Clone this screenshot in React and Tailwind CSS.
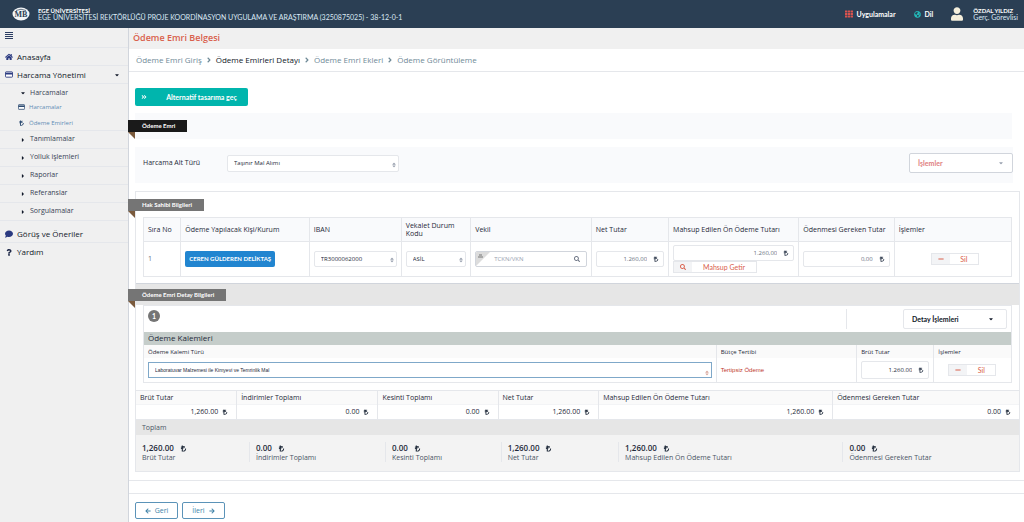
import React from "react";
import {
  FaAngleDoubleRight,
  FaAngleRight,
  FaArrowLeft,
  FaArrowRight,
  FaCaretDown,
  FaCaretRight,
  FaComment,
  FaGlobeAmericas,
  FaHome,
  FaLiraSign,
  FaMinus,
  FaQuestion,
  FaSearch,
  FaSort,
  FaTh,
  FaUser,
} from "react-icons/fa";

const subMenu = ["Tanımlamalar", "Yolluk işlemleri", "Raporlar", "Referanslar", "Sorgulamalar"];

const steps = ["Ödeme Emri Giriş", "Ödeme Emirleri Detayı", "Ödeme Emri Ekleri", "Ödeme Görüntüleme"];

const totals = [
  { name: "Brüt Tutar", value: "1,260.00", col: "w-[11.4%]", box: "w-[12.8%]" },
  { name: "İndirimler Toplamı", value: "0.00", col: "w-[16%]", box: "w-[15.4%]" },
  { name: "Kesinti Toplamı", value: "0.00", col: "w-[13.6%]", box: "w-[13.1%]" },
  { name: "Net Tutar", value: "1,260.00", col: "w-[11.4%]", box: "w-[13.3%]" },
  { name: "Mahsup Edilen Ön Ödeme Tutarı", value: "1,260.00", col: "w-[26.5%]", box: "w-[25.4%]" },
  { name: "Ödenmesi Gereken Tutar", value: "0.00", col: "w-[21.1%]", box: "w-[20%]" },
];

const CardIcon = ({ className }) => (
  <svg className={className} viewBox="0 0 18 14">
    <rect x="1" y="1" width="16" height="12" rx="1.500" fill="#fff" stroke="currentColor" strokeWidth="2" />
    <path d="M1 3h16v4H1z" fill="currentColor" />
  </svg>
);

const Ribbon = ({ children, dark }) => (
  <div className="-ml-2 flex flex-col items-start">
    <h2
      className={`h-3 pl-3.5 pr-3 font-[Lato] text-[6px] font-bold leading-3 text-white ${
        dark ? "bg-[#1a1a1a]" : "bg-[#757575]"
      }`}
    >
      {children}
    </h2>
    <svg className="h-2 w-2" viewBox="0 0 8 8">
      <path d="M0 0h7v7z" fill="#7a5a3c" />
    </svg>
  </div>
);

const Select = ({ label, value, className }) => (
  <div className={`relative ${className}`}>
    <select
      aria-label={label}
      className="h-full w-full appearance-none rounded-xs border border-gray-200 bg-white pl-1.5 pr-3 text-[6px] leading-3 text-gray-800"
    >
      <option>{value}</option>
    </select>
    <FaSort className="pointer-events-none absolute bottom-1 right-0.5 h-1.5 w-1.5 text-gray-400" />
  </div>
);

const Money = ({ label, value, className }) => (
  <div className={`flex items-center rounded-xs border border-gray-200 bg-white pr-1 ${className}`}>
    <input
      aria-label={label}
      defaultValue={value}
      className="w-full min-w-0 bg-transparent text-right text-[6px] leading-3 outline-none"
    />
    <FaLiraSign className="ml-1.5 h-1.5 w-1.5 shrink-0 text-gray-700" />
  </div>
);

const DeleteButton = () => (
  <button className="flex h-3 w-12 items-stretch border border-gray-200 font-[Lato] text-[7px] leading-2.5 text-[#d9604c]">
    <span className="flex w-4.5 items-center justify-center bg-gray-100">
      <FaMinus className="h-1.5 w-1.5" />
    </span>
    <span className="flex-1">Sil</span>
  </button>
);

const Header = () => (
  <header className="flex h-7 items-center justify-between bg-[#2b3f54] pl-3 pr-1.5 font-[Lato] text-white">
    <div className="flex items-center gap-2">
      <svg className="h-4 w-4.5" viewBox="0 0 18 16">
        <ellipse cx="9" cy="8" rx="8.500" ry="6.500" fill="#f3f5f7" />
        <text x="9" y="11" textAnchor="middle" fontSize="8" fontWeight="700" fontFamily="Liberation Serif" fill="#2b3f54">
          MB
        </text>
        <path d="M4 4.500q5-2.500 10 0" fill="none" stroke="#2b3f54" strokeWidth=".7" />
      </svg>
      <div className="leading-[7px]">
        <div className="text-[6px] font-bold">EGE ÜNİVERSİTESİ</div>
        <div className="text-[7px] text-[#dbe9f5]">
          EGE ÜNİVERSİTESİ REKTÖRLÜĞÜ PROJE KOORDİNASYON UYGULAMA VE ARAŞTIRMA (3250875025) - 38-12-0-1
        </div>
      </div>
    </div>
    <div className="flex items-center gap-4.5 text-[7px] font-bold">
      <a href="#" className="flex items-center gap-1">
        <FaTh className="h-2 w-2 text-[#d9534f]" />
        Uygulamalar
      </a>
      <a href="#" className="flex items-center gap-1">
        <FaGlobeAmericas className="h-[7px] w-[7px] text-[#22b8b8]" />
        Dil
      </a>
      <a href="#" className="flex items-center gap-2.5 leading-[7px]">
        <FaUser className="h-3.5 w-3 text-[#f5efdc]" />
        <span>
          <span className="block text-[6px]">ÖZDAL YILDIZ</span>
          <span className="block font-normal text-[#dbe9f5]">Gerç. Görevlisi</span>
        </span>
      </a>
    </div>
  </header>
);

const Sidebar = () => (
  <aside className="w-[129px] shrink-0 border-r border-gray-300 bg-[#f0f0f0] text-[8px] text-gray-900">
    <button aria-label="Menü" className="flex h-5 w-full items-center border-b border-gray-200 pl-[5px] pb-1">
      <svg className="h-[7px] w-2" viewBox="0 0 8 7" shapeRendering="crispEdges">
        <path d="M0 0h8v1H0zM0 2h8v1H0zM0 4h8v1H0zM0 6h8v1H0z" fill="#2c3e63" />
      </svg>
    </button>
    <nav>
      <a href="#" className="flex h-[18px] items-center gap-1 border-b border-gray-200 pl-[5px]">
        <FaHome className="h-2 w-2 text-[#2b3a80]" />
        Anasayfa
      </a>
      <a href="#" className="flex h-[18px] items-center gap-1 border-b border-gray-200 pl-[5px] pr-2">
        <CardIcon className="h-[7px] w-2 text-[#2b3a80]" />
        Harcama Yönetimi
        <FaCaretDown className="ml-auto h-1.5 w-1.5" />
      </a>
      <div className="border-b border-gray-200 text-[6px]">
        <a href="#" className="flex h-[18px] items-center gap-1 pl-5 text-[7px] text-gray-700">
          <FaCaretDown className="h-1.5 w-1.5 text-gray-900" />
          Harcamalar
        </a>
        <a href="#" className="flex h-3.5 items-center gap-1 pb-1 pl-4.5 text-[#5f8db5]">
          <CardIcon className="h-1.5 w-[7px] text-[#2c4a70]" />
          Harcamalar
        </a>
        <a href="#" className="flex h-3.5 items-center gap-1 pl-4.5 text-[#5f8db5]">
          <FaLiraSign className="h-1.5 w-[7px] text-[#2c4a70]" />
          Ödeme Emirleri
        </a>
      </div>
      {subMenu.map((name) => (
        <a
          key={name}
          href="#"
          className="flex h-[18px] items-center gap-1 border-b border-gray-200 pl-5 text-[7px] text-gray-700 last:border-0"
        >
          <FaCaretRight className="h-1.5 w-1.5 text-gray-900" />
          {name}
        </a>
      ))}
      <a href="#" className="mt-1 flex h-[18px] items-center gap-1 border-b border-gray-200 pl-[5px]">
        <FaComment className="h-2 w-2 text-[#2b3a80]" />
        Görüş ve Öneriler
      </a>
      <a href="#" className="flex h-[18px] items-center gap-1 pl-[5px]">
        <FaQuestion className="h-[7px] w-2 text-[#1d2747]" />
        Yardım
      </a>
    </nav>
  </aside>
);

const PayeeTable = () => (
  <table className="w-full table-fixed border-collapse border border-gray-200 text-left">
    <colgroup>
      <col className="w-[4.3%]" />
      <col className="w-[14.8%]" />
      <col className="w-[10.6%]" />
      <col className="w-[8%]" />
      <col className="w-[13.9%]" />
      <col className="w-[8.9%]" />
      <col className="w-[15%]" />
      <col className="w-[11%]" />
      <col className="w-[13.5%]" />
    </colgroup>
    <thead className="bg-[#f9fafc]">
      <tr className="h-6 border-b border-gray-200">
        {[
          "Sıra No",
          "Ödeme Yapılacak Kişi/Kurum",
          "IBAN",
          "Vekalet Durum Kodu",
          "Vekil",
          "Net Tutar",
          "Mahsup Edilen Ön Ödeme Tutarı",
          "Ödenmesi Gereken Tutar",
          "İşlemler",
        ].map((name) => (
          <th key={name} className="border-r border-gray-200 px-1 font-normal">
            {name}
          </th>
        ))}
      </tr>
    </thead>
    <tbody>
      <tr className="h-[35px] text-gray-500">
        <td className="border-r border-gray-200 px-1">1</td>
        <td className="border-r border-gray-200 px-1">
          <button className="h-4 rounded-xs bg-[#2185d0] px-1 font-[Lato] text-[6px] font-bold leading-4 text-white">
            CEREN GÜLDEREN DELİKTAŞ
          </button>
        </td>
        <td className="border-r border-gray-200 px-1">
          <Select label="IBAN" value="TR3000062000" className="h-4" />
        </td>
        <td className="border-r border-gray-200 px-1">
          <Select label="Vekalet Durum Kodu" value="ASİL" className="h-4" />
        </td>
        <td className="border-r border-gray-200 px-1">
          <div className="flex h-4 items-center overflow-hidden rounded-xs border border-gray-300 pr-1.5">
            <svg className="h-4 w-4 shrink-0" viewBox="0 0 16 16">
              <path d="M0 0h15L0 15z" fill="#dcdcdc" />
              <path d="M2 6h5M3 4h3" stroke="#777" strokeWidth="1" />
            </svg>
            <input
              aria-label="Vekil"
              placeholder="TCKN/VKN"
              className="w-full min-w-0 pl-0.5 text-[6px] leading-3 outline-none placeholder:text-gray-400"
            />
            <FaSearch className="h-1.5 w-1.5 shrink-0 text-gray-500" />
          </div>
        </td>
        <td className="border-r border-gray-200 px-1">
          <Money label="Net Tutar" value="1.260,00" className="h-4" />
        </td>
        <td className="border-r border-gray-200 px-1">
          <Money label="Mahsup Edilen Ön Ödeme Tutarı" value="1.260,00" className="h-4" />
          <button className="flex h-3 w-[84px] items-stretch border border-gray-200 font-[Lato] text-[7px] leading-2.5 text-[#d9604c]">
            <span className="flex w-4.5 items-center justify-center bg-gray-100">
              <FaSearch className="h-1.5 w-1.5" />
            </span>
            <span className="flex-1">Mahsup Getir</span>
          </button>
        </td>
        <td className="border-r border-gray-200 px-1">
          <Money label="Ödenmesi Gereken Tutar" value="0,00" className="h-4" />
        </td>
        <td className="pl-9">
          <DeleteButton />
        </td>
      </tr>
    </tbody>
  </table>
);

const ItemTable = () => (
  <table className="w-full table-fixed border-collapse text-left text-[6px]">
    <colgroup>
      <col className="w-[66%]" />
      <col className="w-[16.2%]" />
      <col className="w-[8.9%]" />
      <col className="w-[8.9%]" />
    </colgroup>
    <thead className="bg-[#fafafa]">
      <tr className="h-[13px]">
        {["Ödeme Kalemi Türü", "Bütçe Tertibi", "Brüt Tutar", "İşlemler"].map((name) => (
          <th key={name} className="border-l border-gray-200 px-1 font-normal first:border-0">
            {name}
          </th>
        ))}
      </tr>
    </thead>
    <tbody>
      <tr className="h-6">
        <td className="px-1">
          <div className="relative">
            <select
              aria-label="Ödeme Kalemi Türü"
              className="block h-4 w-full appearance-none border border-[#7fa8c9] bg-white px-1.5 font-['Liberation_Sans',sans-serif] text-[5px]"
            >
              <option>Laboratuvar Malzemesi ile Kimyevi ve Temrinlik Mal</option>
            </select>
            <FaSort className="pointer-events-none absolute bottom-0.5 right-0.5 h-1.5 w-1.5 text-[#d9a79c]" />
          </div>
        </td>
        <td className="border-l border-gray-200 px-1 font-['Liberation_Sans',sans-serif] text-[#c0392b]">
          Tertipsiz Ödeme
        </td>
        <td className="border-l border-gray-200 px-1">
          <Money label="Brüt Tutar" value="1.260.00" className="h-[18px]" />
        </td>
        <td className="border-l border-gray-200 pl-3.5">
          <DeleteButton />
        </td>
      </tr>
    </tbody>
  </table>
);

const App = () => {
  return (
    <div className="flex min-h-screen flex-col bg-white font-['Open_Sans',sans-serif] antialiased">
      <Header />
      <div className="flex flex-1">
        <Sidebar />
        <main className="min-w-0 flex-1 text-[7px] leading-2 text-gray-800">
          <h1 className="h-[21px] bg-[#f0f0f0] pl-1 text-[9px] font-semibold leading-5 text-[#d9604c]">
            Ödeme Emri Belgesi
          </h1>
          <ol className="flex h-[23px] items-center gap-1 border-b border-gray-200 pl-[7px] text-[8px] text-[#6f8a97]">
            {steps.map((step, i) => (
              <li key={step} className="flex items-center gap-1">
                {i > 0 && <FaAngleRight className="h-2 w-1.5" />}
                <a href="#" className={i === 1 ? "font-medium text-gray-900" : ""}>
                  {step}
                </a>
              </li>
            ))}
          </ol>

          <div className="pl-1.5 pr-1">
            <button className="mt-4 flex h-[18px] w-[113px] items-center rounded-xs bg-[#00b5ad] pl-1.5 font-[Lato] text-[7px] font-bold text-white">
              <FaAngleDoubleRight className="h-1.5 w-1.5" />
              <span className="flex-1 pl-2 text-center">Alternatif tasarıma geç</span>
            </button>

            <div className="mr-2 mt-[7px] h-[26px] bg-[#f9fafc] pl-px pt-[7px]">
              <Ribbon dark>Ödeme Emri</Ribbon>
            </div>

            <div className="mr-[7px] mt-2 flex h-9 items-center bg-[#f9fafc] pb-1 pl-2">
              <span className="w-[84px]">Harcama Alt Türü</span>
              <Select label="Harcama Alt Türü" value="Taşınır Mal Alımı" className="h-[17px] w-[172px]" />
              <button className="ml-auto flex h-5 w-26 items-center justify-between rounded-xs border border-gray-300 bg-white px-2 font-[Lato] text-[7px] font-bold text-[#e08080]">
                İşlemler
                <FaCaretDown className="h-1.5 w-1.5 text-gray-400" />
              </button>
            </div>

            <section className="mt-2 border border-gray-200">
              <div className="h-[91px] pt-[7px]">
                <Ribbon>Hak Sahibi Bilgileri</Ribbon>
                <div className="-mt-0.5 px-[7px]">
                  <PayeeTable />
                </div>
              </div>

              <div className="h-[22px] border-t border-gray-300 bg-[#e6e6e6] pt-[5px]">
                <Ribbon>Ödeme Emri Detay Bilgileri</Ribbon>
              </div>

              <div className="mx-[7px] mb-[7px] border border-gray-200">
                <div className="flex h-[26px] items-center justify-between px-1">
                  <span className="mb-1.5 h-3 w-3 rounded-full bg-[#757575] text-center font-[Lato] text-[7px] font-bold leading-3 text-white">
                    1
                  </span>
                  <div className="flex h-5 border-l border-gray-200 pl-14">
                    <button className="flex h-5 w-26 items-center justify-between rounded-xs border border-gray-200 bg-white pl-2 pr-3 font-[Lato] text-[7px] font-bold text-gray-900">
                      Detay İşlemleri
                      <FaCaretDown className="h-1.5 w-1.5" />
                    </button>
                  </div>
                </div>
                <h3 className="h-[13px] bg-[#c5cdca] pl-1 text-[8px] font-medium leading-3">Ödeme Kalemleri</h3>
                <ItemTable />
              </div>

              <table className="w-full table-fixed border-collapse border-y border-gray-200">
                <thead className="bg-[#fafafa]">
                  <tr className="h-3.5 text-left">
                    {totals.map((t) => (
                      <th key={t.name} className={`border-l border-gray-200 px-1 font-normal first:border-0 ${t.col}`}>
                        {t.name}
                      </th>
                    ))}
                  </tr>
                </thead>
                <tbody>
                  <tr className="h-[15px] border-t border-gray-100 text-right">
                    {totals.map((t) => (
                      <td key={t.name} className="border-l border-gray-200 pr-2 first:border-0">
                        {t.value}
                        <FaLiraSign className="ml-1 inline h-1.5 w-1.5" />
                      </td>
                    ))}
                  </tr>
                </tbody>
              </table>

              <h3 className="h-[15px] bg-[#e6e6e6] pl-1.5 leading-[15px] text-gray-600">Toplam</h3>
              <div className="flex h-9 bg-[#f3f3f3] pt-[7px]">
                {totals.map((t) => (
                  <div key={t.name} className={`h-5 border-l border-gray-200 pl-1.5 first:border-0 ${t.box}`}>
                    <div className="flex items-center gap-1.5 text-[8px] font-semibold leading-3">
                      {t.value}
                      <FaLiraSign className="h-[7px] w-[7px]" />
                    </div>
                    <div className="text-gray-600">{t.name}</div>
                  </div>
                ))}
              </div>
            </section>
          </div>

          <div className="mt-2 h-3.5 border-y border-gray-200" />
          <div className="mt-2 flex gap-1 pl-1.5 text-[7px] text-[#4183a8]">
            <button className="flex h-[17px] w-[43px] items-center justify-center gap-1 rounded-xs border border-[#5b93b8]">
              <FaArrowLeft className="h-1.5 w-1.5" />
              Geri
            </button>
            <button className="flex h-[17px] w-[43px] items-center justify-center gap-1 rounded-xs border border-[#5b93b8]">
              İleri
              <FaArrowRight className="h-1.5 w-1.5" />
            </button>
          </div>
        </main>
      </div>
    </div>
  );
};

export default App;
